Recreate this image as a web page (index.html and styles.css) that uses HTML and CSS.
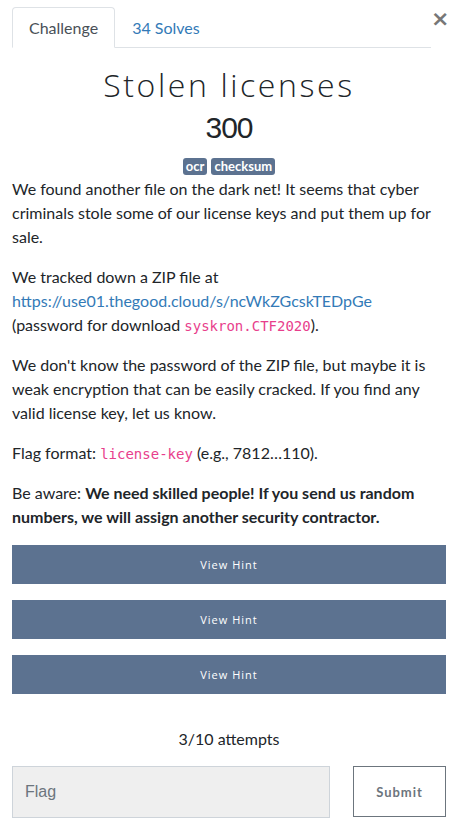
FILE: index.html
```html
<!DOCTYPE html>
<html>
<head>
<meta charset="utf-8">
<link rel="stylesheet" href="styles.css">
</head>
<body>
<div class="modal">
  <div class="header">
    <ul class="tabs">
      <li class="tab active">Challenge</li>
      <li class="tab"><a href="#">34 Solves</a></li>
    </ul>
    <button class="close">×</button>
  </div>
  <div class="body">
    <h2 class="title">Stolen licenses</h2>
    <h3 class="value">300</h3>
    <div class="tags"><span class="badge">ocr</span><span class="badge">checksum</span></div>
    <div class="desc">
      <p>We found another file on the dark net! It seems that cyber criminals stole some of our license keys and put them up for sale.</p>
      <p>We tracked down a ZIP file at <a href="#">https://use01.thegood.cloud/s/ncWkZGcskTEDpGe</a> (password for download <code>syskron.CTF2020</code>).</p>
      <p>We don't know the password of the ZIP file, but maybe it is weak encryption that can be easily cracked. If you find any valid license key, let us know.</p>
      <p>Flag format: <code>license-key</code> (e.g., 7812…110).</p>
      <p>Be aware: <strong>We need skilled people! If you send us random numbers, we will assign another security contractor.</strong></p>
    </div>
    <div class="hints">
      <button class="hint">View Hint</button>
      <button class="hint">View Hint</button>
      <button class="hint">View Hint</button>
    </div>
    <div class="attempts">3/10 attempts</div>
    <div class="submit-row">
      <input class="flag" type="text" placeholder="Flag">
      <button class="submit">Submit</button>
    </div>
  </div>
</div>
</body>
</html>
```
FILE: styles.css
```css
html, body {
  margin: 0;
  padding: 0;
  background: #fff;
}
body {
  font-family: Lato, "Open Sans", sans-serif;
  color: #212529;
  font-size: 16px;
  line-height: 1.5;
}
.modal {
  padding: 7px 15px 0 12px;
}
.header {
  display: flex;
  align-items: flex-start;
}
.tabs {
  list-style: none;
  margin: 0;
  padding: 0;
  display: flex;
  flex: 1;
  border-bottom: 1px solid #dee2e6;
}
.tab {
  padding: 8px 16px 7px;
  margin-bottom: -1px;
  border: 1px solid transparent;
  border-top-left-radius: 4px;
  border-top-right-radius: 4px;
  font-size: 16px;
  line-height: 24px;
}
.tab.active {
  color: #495057;
  border-color: #dee2e6 #dee2e6 #fff;
  background: #fff;
}
.tab a {
  color: #337ab7;
  text-decoration: none;
}
.close {
  width: 14px;
  border: none;
  background: none;
  padding: 0;
  font-family: "DejaVu Sans", sans-serif;
  font-size: 22px;
  line-height: 22px;
  font-weight: bold;
  color: #777;
  margin-top: 1px;
  margin-right: 1px;
}
.title {
  margin: 17px 0 0;
  text-align: center;
  font-family: "Open Sans", sans-serif;
  font-weight: 300;
  font-size: 32px;
  line-height: 40px;
  letter-spacing: 2.6px;
}
.value {
  margin: 5px 0 0;
  text-align: center;
  font-family: "Liberation Sans", Arial, sans-serif;
  font-weight: 400;
  font-size: 30px;
  line-height: 36px;
  letter-spacing: -1px;
}
.tags {
  display: flex;
  justify-content: center;
  gap: 4px;
  margin: 12px 0 2px;
}
.badge {
  background: #5c7290;
  color: #fff;
  font-size: 13px;
  font-weight: 700;
  line-height: 17px;
  padding: 0 3px;
  border-radius: 3px;
}
.desc {
  margin-bottom: 1px;
}
.desc p {
  margin: 0 0 16px;
}
.desc a {
  color: #337ab7;
  text-decoration: none;
}
code {
  font-family: "DejaVu Sans Mono", monospace;
  font-size: 14px;
  color: #e83e8c;
}
.hints {
  display: flex;
  flex-direction: column;
  gap: 16px;
}
.hint {
  height: 39px;
  background: #5c7290;
  border: none;
  color: #fff;
  font-family: "Open Sans", sans-serif;
  font-size: 11px;
  letter-spacing: 1px;
  padding: 0;
}
.attempts {
  text-align: center;
  margin-top: 33px;
  line-height: 24px;
}
.submit-row {
  display: flex;
  justify-content: space-between;
  margin-top: 15px;
}
.flag {
  width: 318px;
  height: 52px;
  box-sizing: border-box;
  background: #efefef;
  border: 1px solid #ced4da;
  font-family: "Liberation Sans", Arial, sans-serif;
  font-size: 16px;
  padding: 0 12px;
  outline: none;
}
.flag::placeholder {
  color: #6c757d;
}
.submit {
  width: 93px;
  height: 51px;
  background: #fff;
  border: 1px solid #6c757d;
  color: #6c757d;
  font-family: Lato, sans-serif;
  font-weight: 700;
  font-size: 13px;
  letter-spacing: 1px;
  padding: 0;
}
```
